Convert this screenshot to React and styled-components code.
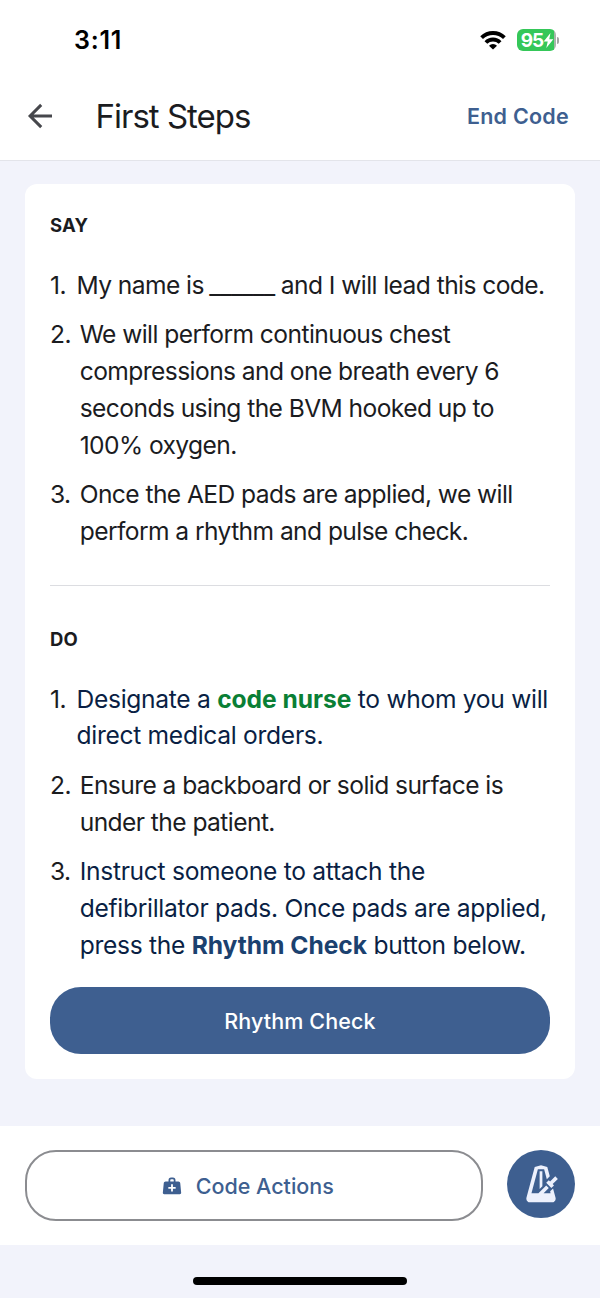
import React from "react";
import styled, { createGlobalStyle } from "styled-components";

const App = () => {
  return (
    <Screen>
      <GlobalStyle />
      <StatusBar>
        <Time>3:11</Time>
        <StatusIcons>
          <WifiIcon />
          <Battery>
            <BatteryBody>
              95
              <BoltIcon />
            </BatteryBody>
            <BatteryCap />
          </Battery>
        </StatusIcons>
      </StatusBar>
      <Header>
        <BackButton aria-label="Back">
          <BackIcon />
        </BackButton>
        <Title>First Steps</Title>
        <EndButton>End Code</EndButton>
      </Header>
      <Content>
        <Card>
          <SectionTitle>SAY</SectionTitle>
          <Steps>
            <Step>
              <Num>1.</Num>
              <StepText>
                My name is <Blank>______</Blank> and I will lead this code.
              </StepText>
            </Step>
            <Step>
              <Num $wide>2.</Num>
              <StepText>
                We will perform continuous chest
                <br />
                compressions and one breath every 6<br />
                seconds using the BVM hooked up to
                <br />
                100% oxygen.
              </StepText>
            </Step>
            <Step>
              <Num $wide>3.</Num>
              <StepText>
                Once the AED pads are applied, we will
                <br />
                perform a rhythm and pulse check.
              </StepText>
            </Step>
          </Steps>
          <Divider />
          <SectionTitle>DO</SectionTitle>
          <Steps>
            <Step>
              <Num>1.</Num>
              <StepText $navy>
                Designate a <Strong $color="#0a7f35">code nurse</Strong> to whom
                you will
                <br />
                direct medical orders.
              </StepText>
            </Step>
            <Step>
              <Num $wide>2.</Num>
              <StepText>
                Ensure a backboard or solid surface is
                <br />
                under the patient.
              </StepText>
            </Step>
            <Step>
              <Num $wide>3.</Num>
              <StepText $navy>
                Instruct someone to attach the
                <br />
                defibrillator pads. Once pads are applied,
                <br />
                press the <Strong $color="#1b416f">Rhythm Check</Strong> button
                below.
              </StepText>
            </Step>
          </Steps>
          <PrimaryButton>Rhythm Check</PrimaryButton>
        </Card>
      </Content>
      <Footer>
        <OutlineButton>
          <BagIcon />
          Code Actions
        </OutlineButton>
        <RoundButton aria-label="Metronome">
          <MetronomeIcon />
        </RoundButton>
      </Footer>
      <HomeArea>
        <HomeIndicator />
      </HomeArea>
    </Screen>
  );
};

export default App;

const WifiIcon = () => (
  <svg width="26" height="20" viewBox="0 0 26 20">
    <g fill="none" stroke="#000" strokeWidth="3.9">
      <path d="M1.6 7.7a16.3 16.3 0 0 1 22.8 0" />
      <path d="M5.9 12.5a10 10 0 0 1 14.2 0" />
    </g>
    <path d="M13 19.6 9 15.7a5.6 5.6 0 0 1 8 0z" fill="#000" />
  </svg>
);

const BoltIcon = () => (
  <svg width="11" height="17" viewBox="0 0 10 15">
    <path d="M6.8.6.6 8.4h3.7L3 14.4l6.4-8H5.7z" fill="#fff" />
  </svg>
);

const BackIcon = () => (
  <svg width="26" height="26" viewBox="0 0 26 26">
    <path
      d="M25 13H3.4M14.2 1.9 3.1 13l11.1 11.1"
      fill="none"
      stroke="#46474c"
      strokeWidth="3"
    />
  </svg>
);

const BagIcon = () => (
  <svg width="22" height="22" viewBox="0 0 24 24" fill="currentColor">
    <path d="M8.2 7V5.6Q8.2 2.8 11 2.8h2q2.800 0 2.800 2.800V7H19c1.060 0 1.880.9 2 2l1 10.400c.1 1-.6 1.600-1.500 1.600h-17C2.600 21 1.900 20.400 2 19.400L3 9c.12-1.100.94-2 2-2h3.200m1.900 0h3.800V5.600q0-.9-.9-.9h-2q-.9 0-.9.9V7m.9 3v3H8v2h3v3h2v-3h3v-2h-3v-3h-2z" />
  </svg>
);

const MetronomeIcon = () => (
  <svg width="44" height="44" viewBox="0 0 24 24" fill="#edf1fd">
    <path d="M12 1.75l-3.43.92-4.51 16.86C4.03 19.68 4 19.84 4 20c0 1.11.89 2 2 2h12c1.11 0 2-.89 2-2 0-.16-.03-.32-.06-.47l-1.36-5.11L17 16l.2 1h-3.79l2.84-2.84-1.41-1.41L10.59 17H6.8l3.49-13h3.42l1.46 5.43 1.63-1.64-1.37-5.12L12 1.75M11.25 5v9.75l1.5-1.5V5h-1.5m8.54 2.8l-2.83 2.83-.71-.71-1.41 1.42 2.82 2.82 1.42-1.41-.71-.71 2.83-2.83-1.41-1.41z" />
  </svg>
);

const GlobalStyle = createGlobalStyle`
  * {
    box-sizing: border-box;
  }

  body {
    margin: 0;
    background-color: #f2f3fb;
  }

  button {
    font: inherit;
    padding: 0;
    border: none;
    background: none;
  }
`;

const Screen = styled.div`
  display: flex;
  flex-direction: column;
  width: 600px;
  height: 1298px;
  overflow: hidden;
  background-color: #f2f3fb;
  color: #1b1c1f;
  font-family: Inter, "Liberation Sans", sans-serif;
`;

const StatusBar = styled.div`
  display: flex;
  align-items: center;
  justify-content: space-between;
  height: 72px;
  padding: 8px 41px 0 74px;
  background-color: #fff;
`;

const Time = styled.div`
  font-size: 25px;
  font-weight: 600;
  letter-spacing: 0.8px;
  color: #000;
`;

const StatusIcons = styled.div`
  display: flex;
  align-items: center;
  gap: 11px;
`;

const Battery = styled.div`
  display: flex;
  align-items: center;
  gap: 1px;
`;

const BatteryBody = styled.div`
  display: flex;
  align-items: center;
  justify-content: center;
  width: 39px;
  height: 22px;
  padding-left: 2px;
  border-radius: 6px;
  background: linear-gradient(to right, #35c759 95%, #a9b5ab 95%);
  color: #fff;
  font-size: 19px;
  font-weight: 700;
  letter-spacing: -0.9px;
`;

const BatteryCap = styled.div`
  width: 2px;
  height: 7px;
  border-radius: 0 3px 3px 0;
  background-color: #a5a5a5;
`;

const Header = styled.header`
  display: flex;
  align-items: center;
  height: 89px;
  padding: 0 31px 0 27px;
  border-bottom: 1px solid #e3e4ea;
  background-color: #fff;
`;

const BackButton = styled.button`
  display: flex;
  margin-right: 42.5px;
`;

const Title = styled.h1`
  flex: 1;
  margin: 0;
  font-size: 33px;
  font-weight: 400;
  letter-spacing: -1px;
`;

const EndButton = styled.button`
  color: #3e5f90;
  font-size: 21.5px;
  font-weight: 600;
  letter-spacing: 0.25px;
`;

const Content = styled.main`
  flex: 1;
  padding: 23px 25px 0;
`;

const Card = styled.section`
  display: flex;
  flex-direction: column;
  height: 895px;
  padding: 30px 25px 25px;
  border-radius: 12px;
  background-color: #fff;
`;

const SectionTitle = styled.h2`
  margin: 0 0 29.6px;
  font-size: 18.5px;
  font-weight: 700;
  line-height: 23px;
  letter-spacing: 0.2px;
`;

const Steps = styled.div`
  display: flex;
  flex-direction: column;
  gap: 12.3px;
`;

const Step = styled.div`
  display: flex;
  font-size: 24.6px;
  line-height: 36.9px;
  letter-spacing: -0.58px;
  white-space: nowrap;
`;

const Num = styled.span`
  flex: none;
  width: ${({ $wide }) => ($wide ? "29.7px" : "26.5px")};
`;

const StepText = styled.div`
  color: ${({ $navy }) => ($navy ? "#0a1f44" : "inherit")};
  letter-spacing: ${({ $navy }) => ($navy ? "-0.3px" : "inherit")};
`;

const Blank = styled.span`
  margin-left: -1px;
  font-size: 25.2px;
  line-height: 1;
  letter-spacing: -0.6px;
`;

const Strong = styled.strong`
  color: ${({ $color }) => $color};
  font-weight: 700;
  letter-spacing: -0.05px;
`;

const Divider = styled.hr`
  width: 100%;
  height: 1px;
  margin: 35.4px 0 42px;
  border: none;
  background-color: #dcdde1;
`;

const PrimaryButton = styled.button`
  height: 67px;
  margin-top: auto;
  border-radius: 31px;
  background-color: #3e5f90;
  color: #fff;
  font-size: 21.5px;
  font-weight: 500;
  letter-spacing: 0.1px;
`;

const Footer = styled.footer`
  display: flex;
  align-items: flex-start;
  justify-content: space-between;
  height: 119px;
  padding: 24px 25px 0;
  background-color: #fff;
`;

const OutlineButton = styled.button`
  display: flex;
  align-items: center;
  justify-content: center;
  gap: 12.5px;
  width: 458px;
  height: 71px;
  && {
    padding-right: 13px;
    border: 2px solid #8b8c90;
  }
  border-radius: 31px;
  color: #3e5f90;
  font-size: 21.5px;
  font-weight: 500;
`;

const RoundButton = styled.button`
  display: flex;
  align-items: center;
  justify-content: center;
  width: 68px;
  height: 68px;
  border-radius: 50%;
  background-color: #3e5f90;
`;

const HomeArea = styled.div`
  display: flex;
  justify-content: center;
  height: 53px;
  padding-top: 32px;
`;

const HomeIndicator = styled.div`
  width: 214px;
  height: 8px;
  border-radius: 4px;
  background-color: #000;
`;
